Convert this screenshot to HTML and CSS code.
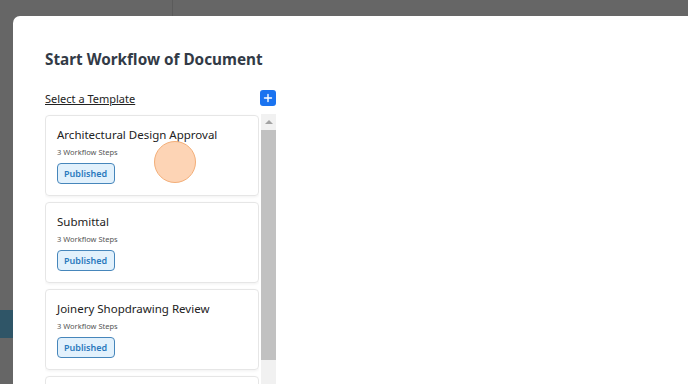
FILE: index.html
```html
<!DOCTYPE html>
<html lang="en">
<head>
    <meta charset="UTF-8">
    <meta name="viewport" content="width=device-width, initial-scale=1.0">
    <title>Start Workflow</title>
    <link rel="stylesheet" href="styles.css">
</head>
<body>
    <div class="backdrop">
        <div class="side">
            <div class="side-active"></div>
        </div>
    </div>
    <div class="modal">
        <h2 class="modal-title">Start Workflow of Document</h2>
        <div class="picker">
            <div class="picker-head">
                <span class="picker-label">Select a Template</span>
                <button class="add-btn" type="button">
                    <svg width="10" height="10" viewBox="0 0 10 10"><path d="M5 1.5v7M1.5 5h7" stroke="#fff" stroke-width="1.4" stroke-linecap="round"/></svg>
                </button>
            </div>
            <div class="picker-list">
                <div class="cards">
                    <div class="card">
                        <div class="card-title">Architectural Design Approval</div>
                        <div class="card-sub">3 Workflow Steps</div>
                        <span class="badge">Published</span>
                    </div>
                    <div class="card">
                        <div class="card-title">Submittal</div>
                        <div class="card-sub">3 Workflow Steps</div>
                        <span class="badge">Published</span>
                    </div>
                    <div class="card">
                        <div class="card-title">Joinery Shopdrawing Review</div>
                        <div class="card-sub">3 Workflow Steps</div>
                        <span class="badge">Published</span>
                    </div>
                    <div class="card"></div>
                </div>
                <div class="scrollbar">
                    <div class="scroll-up"></div>
                    <div class="scroll-thumb"></div>
                </div>
            </div>
        </div>
        <div class="click-dot"></div>
    </div>
</body>
</html>
```

FILE: styles.css
```css
body {
    margin: 0;
    padding: 0;
    width: 688px;
    height: 384px;
    overflow: hidden;
    background-color: #666666;
    font-family: "Noto Sans", "Open Sans", Arial, sans-serif;
    position: relative;
}
.backdrop {
    height: 384px;
}
.side {
    width: 173px;
    height: 100%;
    border-right: 1px solid #5b5b5b;
    padding-top: 310px;
    box-sizing: border-box;
}
.side-active {
    width: 13px;
    height: 28px;
    background-color: #2f5567;
}
.modal {
    position: absolute;
    left: 13px;
    top: 16px;
    width: 675px;
    height: 368px;
    overflow: hidden;
    background: #ffffff;
    border-radius: 7px 0 0 0;
    padding: 33px 0 0 32px;
    box-sizing: border-box;
}
.modal-title {
    margin: 0 0 20px;
    font-size: 15.3px;
    font-weight: 700;
    color: #323a46;
    line-height: 20px;
}
.picker {
    width: 231px;
}
.picker-head {
    display: flex;
    justify-content: space-between;
    align-items: center;
    height: 18px;
    margin-bottom: 7px;
}
.picker-label {
    font-size: 11px;
    color: #222;
    text-decoration: underline;
}
.add-btn {
    width: 16px;
    height: 16px;
    padding: 0;
    border: none;
    border-radius: 3px;
    background-color: #1a73f0;
    display: flex;
    align-items: center;
    justify-content: center;
}
.picker-list {
    display: flex;
    gap: 2px;
    height: 280px;
}
.cards {
    flex: 1;
    overflow: hidden;
    padding-top: 1px;
}
.card {
    border: 1px solid #e6e6e6;
    border-radius: 4px;
    box-shadow: 0 1px 3px rgba(0, 0, 0, 0.06);
    padding: 11px 11px 8px;
    margin-bottom: 6px;
    height: 60px;
}
.card-title {
    font-size: 11.5px;
    color: #222;
    line-height: 16px;
}
.card-sub {
    font-size: 7.5px;
    color: #555;
    line-height: 12px;
    margin-top: 3px;
}
.badge {
    display: inline-block;
    margin-top: 5px;
    padding: 0 7px 0 6px;
    height: 19px;
    line-height: 19px;
    font-size: 9px;
    font-weight: 600;
    color: #2a78bd;
    background-color: #e2f1fc;
    border: 1px solid #4686bb;
    border-radius: 4px;
}
.scrollbar {
    width: 15px;
    background-color: #f1f1f1;
}
.scroll-up {
    height: 16px;
    display: flex;
    align-items: center;
    justify-content: center;
}
.scroll-up::before {
    content: "";
    border-left: 4px solid transparent;
    border-right: 4px solid transparent;
    border-bottom: 4px solid #a3a3a3;
}
.scroll-thumb {
    height: 230px;
    background-color: #c1c1c1;
}
.click-dot {
    position: absolute;
    left: 141px;
    top: 125px;
    width: 40px;
    height: 40px;
    border-radius: 50%;
    background-color: rgba(253, 205, 168, 0.85);
    border: 1.5px solid #f3ae78;
}
```
